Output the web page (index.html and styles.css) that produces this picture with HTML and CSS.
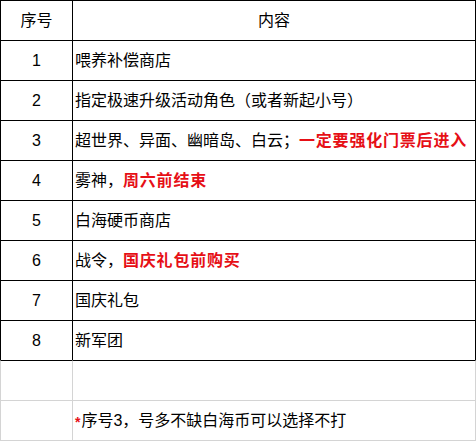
FILE: index.html
```html
<!DOCTYPE html>
<html lang="zh-CN">
<head>
<meta charset="utf-8">
<title>表格</title>
<link rel="stylesheet" href="styles.css">
</head>
<body>
<div class="sheet">
  <div class="row">
    <div class="cell num">序号</div>
    <div class="cell text center">内容</div>
  </div>
  <div class="row">
    <div class="cell num">1</div>
    <div class="cell text">喂养补偿商店</div>
  </div>
  <div class="row">
    <div class="cell num">2</div>
    <div class="cell text">指定极速升级活动角色（或者新起小号）</div>
  </div>
  <div class="row">
    <div class="cell num">3</div>
    <div class="cell text">超世界、异面、幽暗岛、白云；<span class="warn">一定要强化门票后进入</span></div>
  </div>
  <div class="row">
    <div class="cell num">4</div>
    <div class="cell text">雾神，<span class="warn">周六前结束</span></div>
  </div>
  <div class="row">
    <div class="cell num">5</div>
    <div class="cell text">白海硬币商店</div>
  </div>
  <div class="row">
    <div class="cell num">6</div>
    <div class="cell text">战令，<span class="warn">国庆礼包前购买</span></div>
  </div>
  <div class="row">
    <div class="cell num">7</div>
    <div class="cell text">国庆礼包</div>
  </div>
  <div class="row">
    <div class="cell num">8</div>
    <div class="cell text">新军团</div>
  </div>
  <div class="row grid first">
    <div class="cell num"></div>
    <div class="cell text"></div>
  </div>
  <div class="row grid last">
    <div class="cell num"></div>
    <div class="cell text"><span class="star">*</span>序号3，号多不缺白海币可以选择不打</div>
  </div>
</div>
</body>
</html>
```
FILE: styles.css
```css
html, body {
  margin: 0;
  padding: 0;
  background: #ffffff;
}
body {
  font-family: "Liberation Sans", "Noto Sans CJK SC", sans-serif;
  font-size: 16px;
  color: #000000;
}
.sheet {
  width: 476px;
}
.row {
  display: grid;
  grid-template-columns: 72px 404px;
  height: 40px;
}
.cell {
  box-sizing: border-box;
  border-top: 1px solid #000000;
  border-left: 1px solid #000000;
  display: flex;
  align-items: center;
  line-height: 1;
  white-space: nowrap;
  overflow: hidden;
}
.cell.text {
  border-right: 1px solid #000000;
  padding-left: 2px;
}
.cell.num {
  justify-content: center;
}
.cell.center {
  justify-content: center;
  padding-left: 0;
}
.row.grid .cell {
  border-color: #d4d4d4;
}
.row.grid.first .cell {
  border-top-color: #000000;
}
.row.grid.last {
  height: 41px;
}
.row.grid.last .cell {
  border-bottom: 1px solid #d4d4d4;
}
.warn {
  color: #e60f16;
  font-weight: bold;
  letter-spacing: 0.8px;
}
.star {
  color: #e60f16;
  font-weight: bold;
  font-size: 14px;
  margin-top: 3px;
  margin-right: 1px;
}
```
